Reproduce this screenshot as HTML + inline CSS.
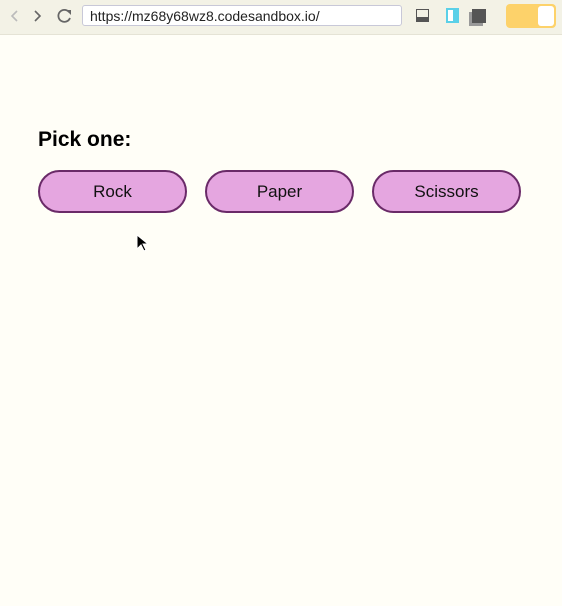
<!DOCTYPE html>
<html><head><style>
body{margin:0;width:562px;height:606px;background:#fffef7;font-family:"Liberation Sans",sans-serif;position:relative;overflow:hidden}
.bar{position:absolute;left:0;top:0;width:562px;height:34px;background:#f3f2e6;border-bottom:1px solid #e5e3d5}
.url{position:absolute;left:82px;top:5px;width:320px;height:21px;border:1px solid #c8c8d8;border-radius:3px;background:#fff;font-size:14px;line-height:21px;padding-left:7px;box-sizing:border-box;color:#222}
h2{position:absolute;left:38px;top:128px;margin:0;font-size:21px;font-weight:bold}
.b{position:absolute;top:170px;width:149px;height:43px;box-sizing:border-box;border:2px solid #6a2a68;border-radius:22px;background:#e5a6e0;font-size:17px;text-align:center;line-height:40px;color:#111}
</style></head><body>
<div class="bar">
<svg width="80" height="34" style="position:absolute;left:0;top:0"><path d="M17 11l-5 5 5 5" stroke="#bbb" stroke-width="1.6" fill="none"/><path d="M35 11l5 5-5 5" stroke="#666" stroke-width="1.6" fill="none"/><path d="M69 12a6 6 0 1 0 1 6" stroke="#666" stroke-width="1.8" fill="none"/><path d="M66 10h5v5z" fill="#666"/></svg>
<div class="url">https://mz68y68wz8.codesandbox.io/</div>
<div style="position:absolute;left:416px;top:9px;width:13px;height:13px;border:1px solid #555;box-sizing:border-box;border-bottom:5px solid #555"></div>
<div style="position:absolute;left:446px;top:8px;width:13px;height:15px;background:#5ad0e8"><div style="margin:2px 2px;width:5px;height:11px;background:#fff"></div></div>
<div style="position:absolute;left:472px;top:9px;width:14px;height:14px;background:#555;box-shadow:-3px 3px 0 #999"></div>
<div style="position:absolute;left:506px;top:4px;width:50px;height:24px;border-radius:4px;background:#fdd26a"><div style="position:absolute;right:2px;top:2px;width:16px;height:20px;background:#fff;border-radius:3px"></div></div>
</div>
<h2>Pick one:</h2>
<div class="b" style="left:38px">Rock</div>
<div class="b" style="left:205px">Paper</div>
<div class="b" style="left:372px">Scissors</div>
<svg width="14" height="18" style="position:absolute;left:136px;top:234px"><path d="M1 1v14l4-4 3 6 2-1-3-6h5z" fill="#000" stroke="#fff" stroke-width="1"/></svg>
</body></html>
